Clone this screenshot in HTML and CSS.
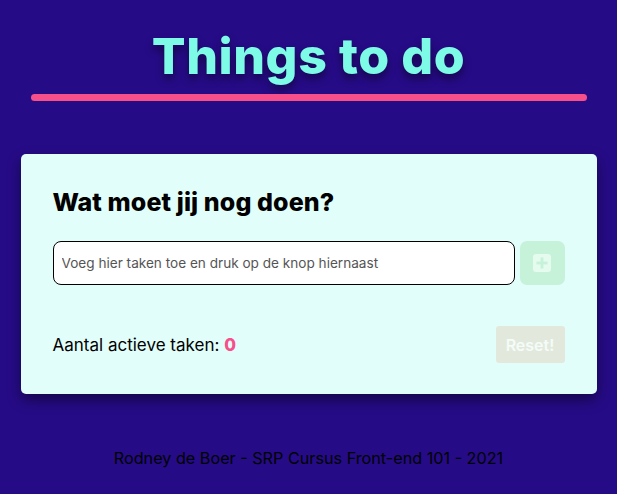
FILE: index.html
```html
<!DOCTYPE html>
<html lang="nl">
<head>
<meta charset="utf-8">
<title>Things to do</title>
<link rel="stylesheet" href="styles.css">
</head>
<body>
<header class="header">
  <h1 class="title">Things to do</h1>
  <div class="title-bar"></div>
</header>
<main class="card">
  <h2 class="card-title">Wat moet jij nog doen?</h2>
  <form class="add-row">
    <input class="task-input" type="text" placeholder="Voeg hier taken toe en druk op de knop hiernaast">
    <button class="add-btn" type="button" aria-label="Toevoegen">
      <svg width="20" height="20" viewBox="0 0 20 20" aria-hidden="true">
        <rect x="1" y="1" width="18" height="18" rx="3" fill="#e4fbee"/>
        <rect x="8.6" y="4.5" width="2.8" height="11" fill="#c6f2da"/>
        <rect x="4.5" y="8.6" width="11" height="2.8" fill="#c6f2da"/>
      </svg>
    </button>
  </form>
  <div class="status-row">
    <p class="counter">Aantal actieve taken: <span class="count">0</span></p>
    <button class="reset-btn" type="button">Reset!</button>
  </div>
</main>
<footer class="footer">Rodney de Boer - SRP Cursus Front-end 101 - 2021</footer>
</body>
</html>
```
FILE: styles.css
```css
* { box-sizing: border-box; }
html, body { height: 100%; }
body {
  margin: 0;
  background: #260b87;
  font-family: Inter, "Noto Sans", sans-serif;
  color: #000;
  display: flex;
  flex-direction: column;
  align-items: center;
}
.header {
  width: 556px;
  display: flex;
  flex-direction: column;
  align-items: center;
  padding-top: 24px;
}
.title {
  margin: 0;
  font-size: 50px;
  font-weight: 800;
  line-height: 64px;
  color: #7dfbe6;
  text-shadow: 0 5px 8px rgba(0, 0, 0, 0.45);
  letter-spacing: 0.6px;
}
.title-bar {
  width: 100%;
  height: 7px;
  margin-top: 6px;
  border-radius: 4px;
  background: #f74f8a;
}
.card {
  margin-top: 53px;
  width: 576px;
  background: #e2fefa;
  border-radius: 5px;
  box-shadow: 0 6px 14px rgba(0, 0, 0, 0.45);
  padding: 32px 32px 31px;
}
.card-title {
  margin: 0;
  font-size: 25px;
  font-weight: 800;
  line-height: 33px;
  letter-spacing: 0.1px;
}
.add-row {
  margin: 22px 0 0;
  display: flex;
  gap: 5px;
}
.task-input {
  flex: 1;
  height: 44px;
  border: 1px solid #000;
  border-radius: 8px;
  background: #fff;
  padding: 0 8px;
  font-family: inherit;
  font-size: 13.6px;
}
.task-input::placeholder { color: #555; }
.add-btn {
  width: 45px;
  height: 44px;
  border: 0;
  border-radius: 7px;
  background: #c6f2da;
  display: flex;
  align-items: center;
  justify-content: center;
  padding: 0;
}
.status-row {
  margin-top: 41px;
  display: flex;
  align-items: center;
  justify-content: space-between;
}
.counter {
  margin: 0;
  font-size: 17px;
}
.count {
  color: #f74f8a;
  font-weight: 800;
}
.reset-btn {
  width: 69px;
  height: 37px;
  border: 0;
  border-radius: 3px;
  background: #e3e8dc;
  color: #f3fcf8;
  font-family: inherit;
  font-size: 16px;
  font-weight: 600;
  padding: 0;
}
.footer {
  margin-top: 54px;
  font-size: 16.2px;
}
```
